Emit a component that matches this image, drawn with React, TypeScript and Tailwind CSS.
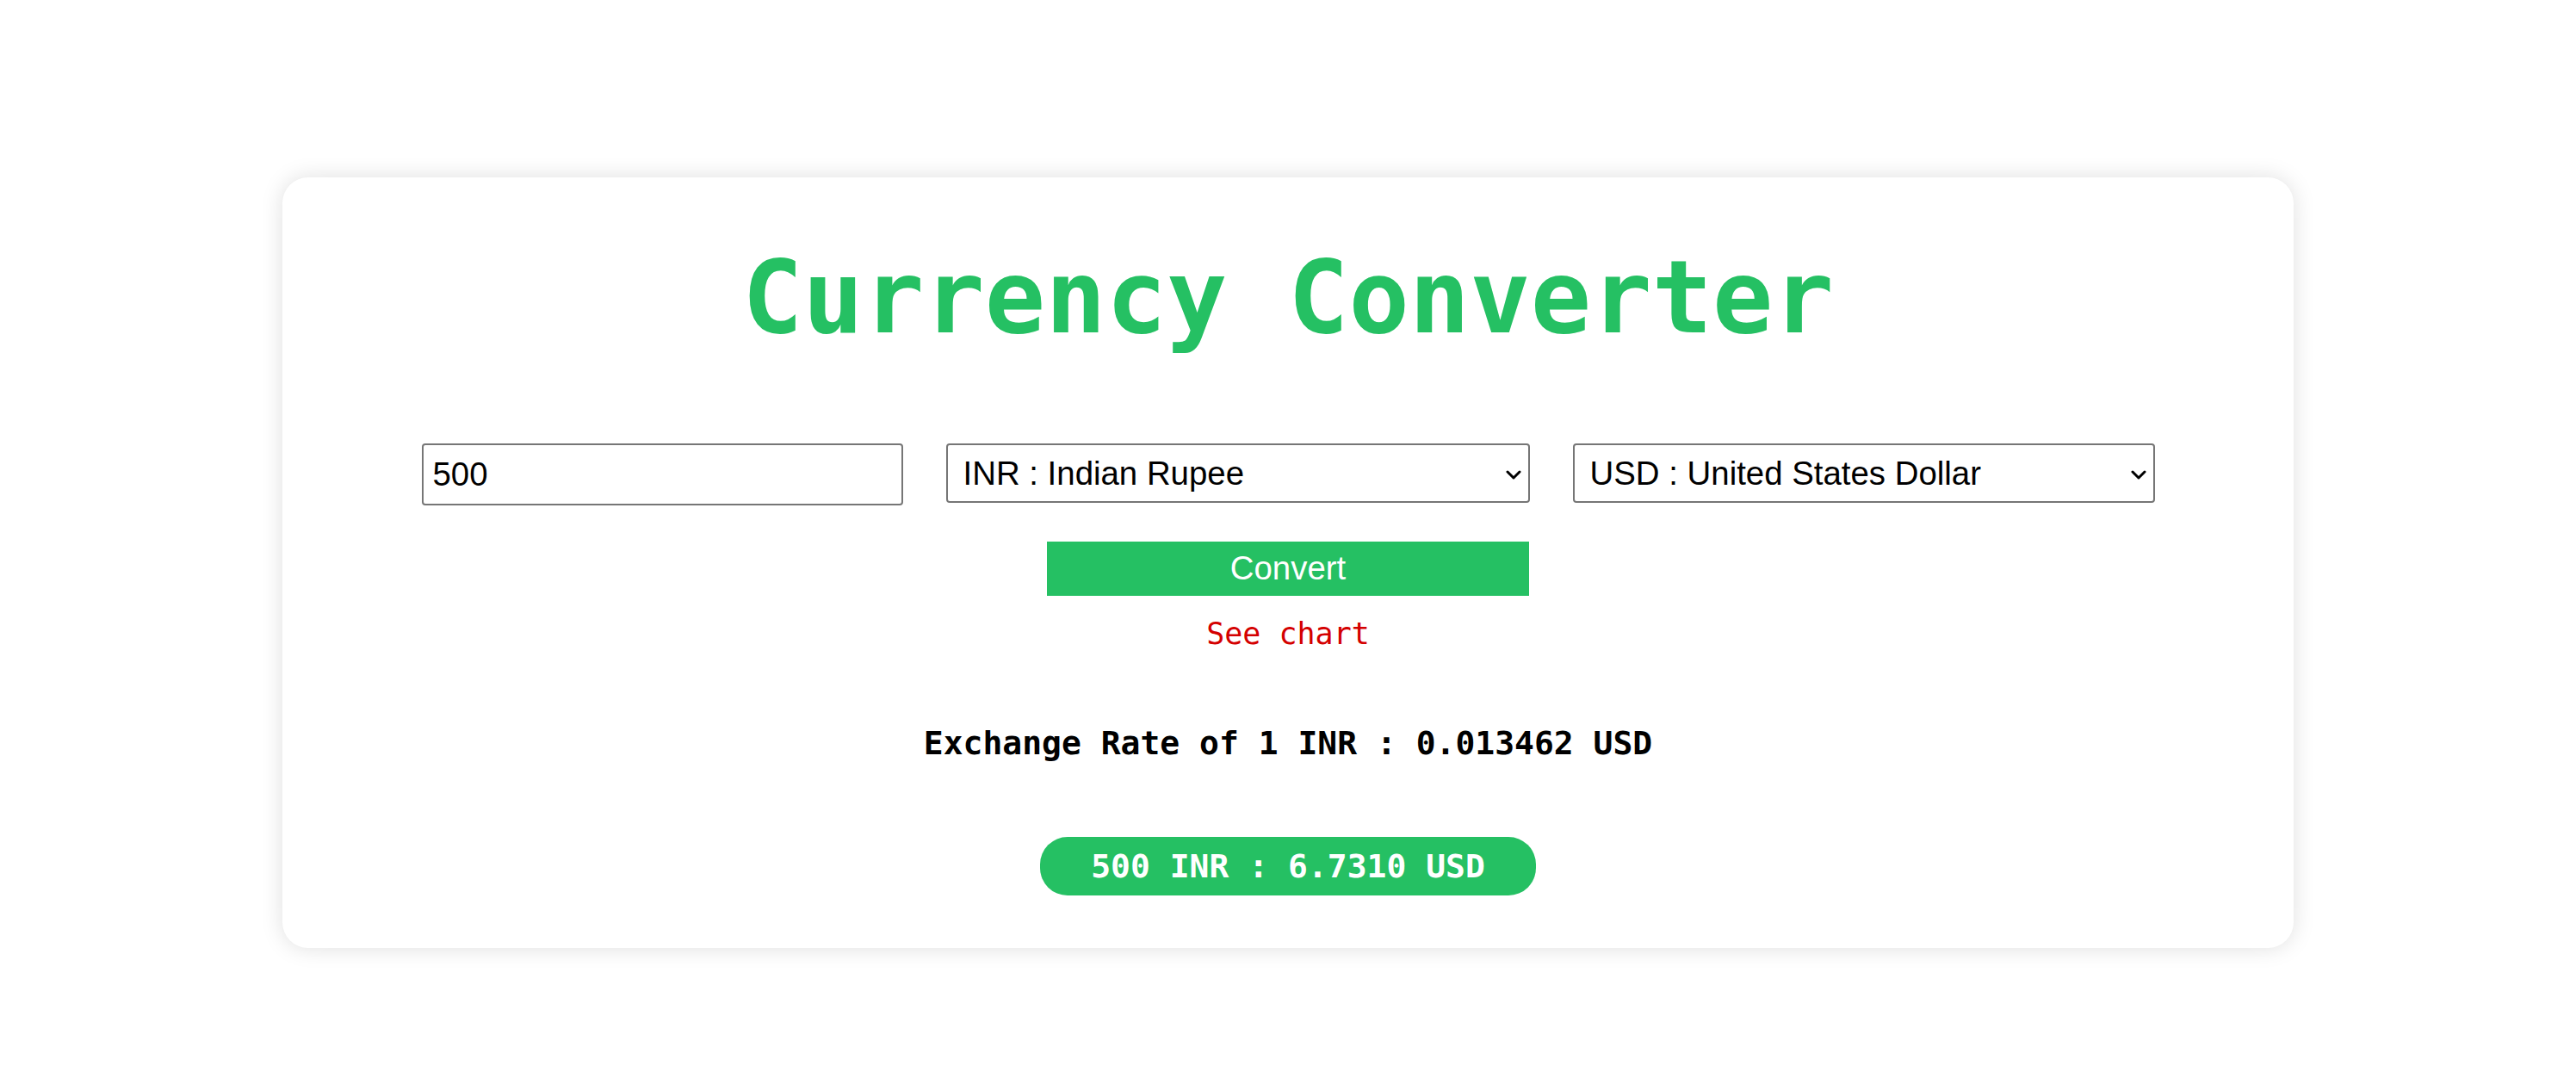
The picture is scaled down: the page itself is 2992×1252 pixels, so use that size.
import React from "react";

const mono = "font-['DejaVu_Sans_Mono','Liberation_Mono',monospace]";
const sans = "font-['Liberation_Sans',Arial,sans-serif]";

function Chevron() {
  return (
    <svg
      className="pointer-events-none absolute right-[10px] top-[31px]"
      width="18"
      height="11"
      viewBox="0 0 18 11"
      fill="none"
    >
      <path d="M2 2 L9 9 L16 2" stroke="#000" strokeWidth="3" strokeLinecap="round" strokeLinejoin="round" />
    </svg>
  );
}

function Select({ value, width }: { value: string; width: string }) {
  return (
    <div className={`relative ${width}`}>
      <select
        defaultValue={value}
        className={`h-[69px] w-full appearance-none rounded-[4px] border-2 border-[#767676] bg-white pl-[18px] pr-[40px] text-[38.4px] text-black ${sans} outline-none`}
      >
        <option value={value}>{value}</option>
      </select>
      <Chevron />
    </div>
  );
}

export default function App() {
  return (
    <div className="min-h-[1252px] w-full bg-white pt-[206px]">
      <div className="mx-auto flex w-[2336px] flex-col items-center rounded-[30px] bg-white pb-[61px] pt-[81px] shadow-[0_0_26px_rgba(0,0,0,0.13)]">
        <h1 className={`${mono} text-[117px] font-bold leading-none text-[#25c063]`}>Currency Converter</h1>

        <div className="mt-[111px] flex items-start justify-center gap-[50px]">
          <input
            type="text"
            defaultValue="500"
            className={`h-[72px] w-[559px] rounded-[4px] border-2 border-[#767676] bg-white px-[11px] text-[38.4px] text-black ${sans} outline-none`}
          />
          <Select value="INR : Indian Rupee" width="w-[678px]" />
          <Select value="USD : United States Dollar" width="w-[676px]" />
        </div>

        <button
          className={`mt-[42px] flex h-[63px] w-[560px] items-center justify-center bg-[#25c063] text-[38.4px] leading-none text-white ${sans}`}
        >
          Convert
        </button>

        <a className={`${mono} mt-[27px] text-[35px] leading-none text-[#d40000]`}>See chart</a>

        <p className={`${mono} mt-[90px] text-[38px] font-bold leading-none text-black`}>
          Exchange Rate of 1 INR : 0.013462 USD
        </p>

        <div
          className={`${mono} mt-[90px] flex h-[68px] w-[576px] items-center justify-center rounded-[32px] bg-[#25c063] text-[38px] font-bold leading-none text-white`}
        >
          500 INR : 6.7310 USD
        </div>
      </div>
    </div>
  );
}
